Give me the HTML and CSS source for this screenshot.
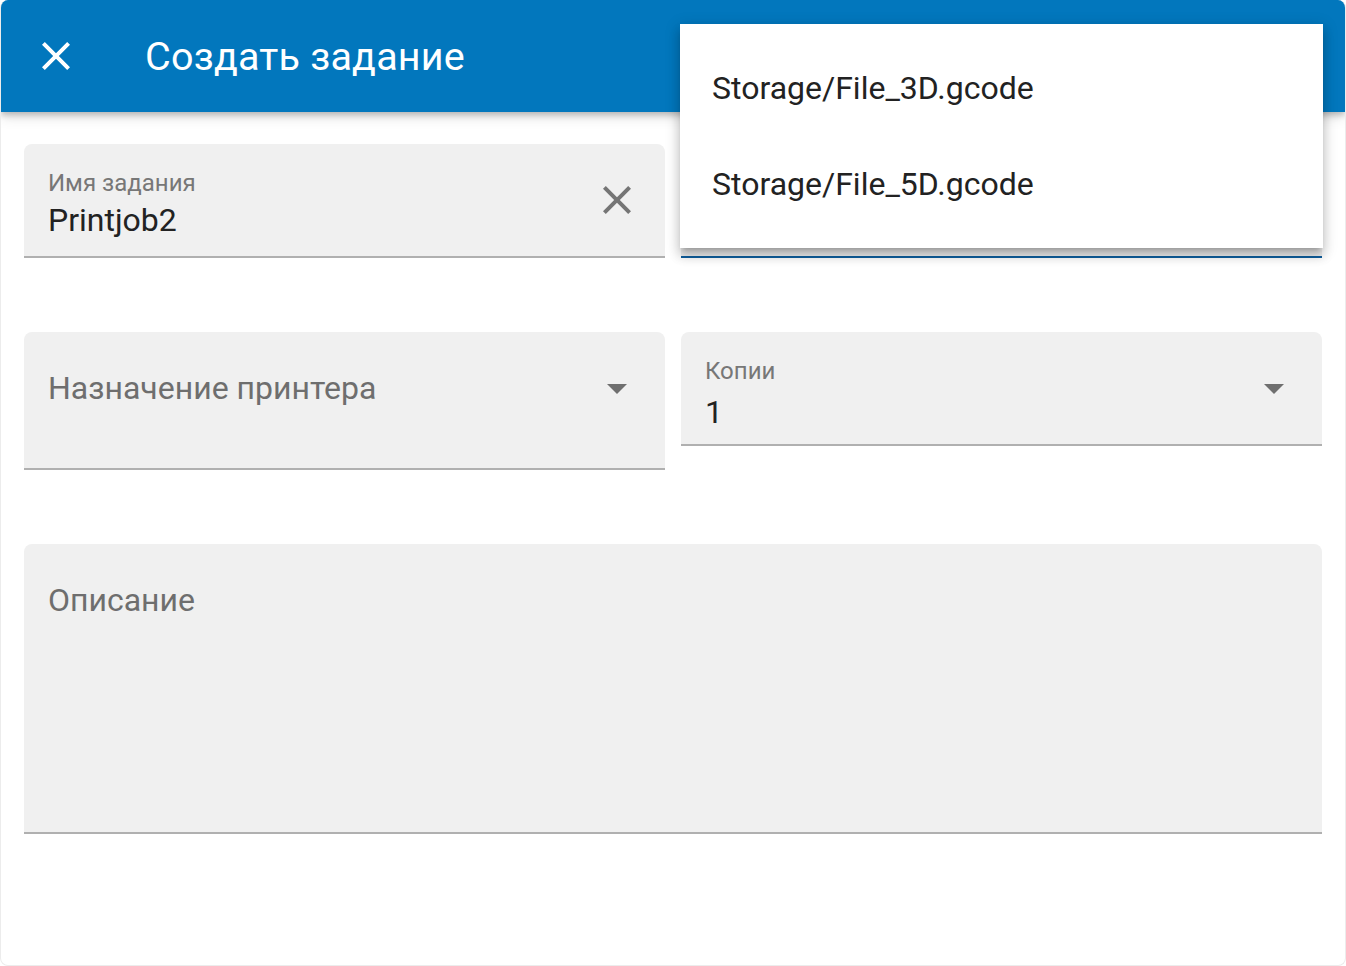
FILE: index.html
```html
<!DOCTYPE html>
<html lang="ru">
<head>
<meta charset="utf-8">
<title>Создать задание</title>
<link rel="stylesheet" href="styles.css">
</head>
<body>
<div class="dialog">
  <header class="toolbar">
    <button class="icon-btn" aria-label="close">
      <svg viewBox="0 0 24 24" width="48" height="48"><path fill="#fff" d="M19,6.41L17.59,5L12,10.59L6.41,5L5,6.41L10.59,12L5,17.59L6.41,19L12,13.41L17.59,19L19,17.59L13.41,12L19,6.41Z"/></svg>
    </button>
    <div class="title">Создать задание</div>
  </header>

  <main class="content">
    <div class="row">
      <div class="field">
        <div class="field-main">
          <div class="field-text labeled">
            <div class="label">Имя задания</div>
            <div class="value">Printjob2</div>
          </div>
          <svg class="icon" viewBox="0 0 24 24" width="48" height="48"><path fill="#757575" d="M19,6.41L17.59,5L12,10.59L6.41,5L5,6.41L10.59,12L5,17.59L6.41,19L12,13.41L17.59,19L19,17.59L13.41,12L19,6.41Z"/></svg>
        </div>
      </div>
      <div class="field focused">
        <div class="field-main"></div>
      </div>
    </div>

    <div class="row">
      <div class="field tall">
        <div class="field-main">
          <div class="field-text">
            <div class="placeholder">Назначение принтера</div>
          </div>
          <svg class="icon" viewBox="0 0 24 24" width="48" height="48"><path fill="#6f6f6f" d="M7,10L12,15L17,10H7Z"/></svg>
        </div>
      </div>
      <div class="field">
        <div class="field-main">
          <div class="field-text labeled copies-text">
            <div class="label">Копии</div>
            <div class="value copies">1</div>
          </div>
          <svg class="icon" viewBox="0 0 24 24" width="48" height="48"><path fill="#6f6f6f" d="M7,10L12,15L17,10H7Z"/></svg>
        </div>
      </div>
    </div>

    <div class="field area">
      <div class="field-main">
        <div class="field-text">
          <div class="placeholder">Описание</div>
        </div>
      </div>
    </div>
  </main>

  <div class="menu">
    <div class="menu-item">Storage/File_3D.gcode</div>
    <div class="menu-item">Storage/File_5D.gcode</div>
  </div>
</div>
</body>
</html>
```

FILE: styles.css
```css
* { box-sizing: border-box; }

html, body {
  margin: 0;
  padding: 0;
  background: #ffffff;
}

body {
  font-family: Roboto, "Noto Sans", "Liberation Sans", sans-serif;
}

.dialog {
  position: relative;
  width: 1346px;
  height: 966px;
  background: #ffffff;
  border-radius: 8px;
  overflow: hidden;
  border: 1px solid #ececec;
  border-top: none;
}

.toolbar {
  position: relative;
  z-index: 1;
  height: 112px;
  background: #0277bd;
  display: flex;
  align-items: center;
  padding-left: 7px;
  box-shadow: 0 3px 6px rgba(0,0,0,0.22), 0 6px 12px rgba(0,0,0,0.10);
}

.icon-btn {
  width: 96px;
  height: 96px;
  border: none;
  background: transparent;
  padding: 0;
  display: flex;
  align-items: center;
  justify-content: center;
}

.title {
  color: #ffffff;
  font-size: 39.5px;
  font-weight: 400;
  padding-left: 41px;
  letter-spacing: 0.2px;
}

.content {
  padding: 32px 23px 24px 23px;
  display: flex;
  flex-direction: column;
  gap: 74px;
}

.row {
  display: grid;
  grid-template-columns: 1fr 1fr;
  gap: 16px;
  align-items: start;
}

.field {
  background: #f0f0f0;
  border-radius: 8px 8px 0 0;
  border-bottom: 2px solid #b0b0b0;
}

.field.focused {
  border-bottom-color: #0f5f9e;
}

.field-main {
  height: 112px;
  display: flex;
  align-items: center;
  padding: 0 24px;
}

.field.tall { height: 138px; }
.field.area { height: 290px; }

.field-text {
  flex: 1;
  display: flex;
  flex-direction: column;
}

.field-text.labeled {
  padding-top: 8px;
}

.field-text.copies-text {
  padding-top: 12px;
}

.label {
  font-size: 24px;
  line-height: 30px;
  color: #777777;
}

.value {
  font-size: 32px;
  line-height: 40px;
  color: #222222;
  margin-top: 2px;
}

.value.copies { margin-top: 6px; }

.placeholder {
  font-size: 32px;
  line-height: 40px;
  color: #6e6e6e;
}

.icon {
  flex: none;
  display: block;
}

.menu {
  position: absolute;
  z-index: 5;
  left: 679px;
  top: 24px;
  width: 643px;
  height: 224px;
  background: #ffffff;
  padding: 16px 0;
  box-shadow: 0 5px 5px -3px rgba(0,0,0,0.2), 0 8px 10px 1px rgba(0,0,0,0.14), 0 3px 14px 2px rgba(0,0,0,0.12);
}

.menu-item {
  height: 96px;
  display: flex;
  align-items: center;
  padding-left: 32px;
  font-size: 32px;
  color: #222222;
}
```
